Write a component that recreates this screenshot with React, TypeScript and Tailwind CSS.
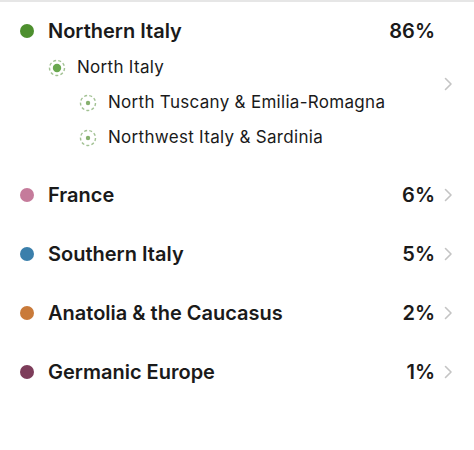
import React from 'react';

type Sub = { name: string; level: number; big?: boolean };

const rows = [
  { name: 'France', pct: '6%', color: 'bg-[#c57b9b]' },
  { name: 'Southern Italy', pct: '5%', color: 'bg-[#3b7fab]' },
  { name: 'Anatolia & the Caucasus', pct: '2%', color: 'bg-[#c97a3a]' },
  { name: 'Germanic Europe', pct: '1%', color: 'bg-[#7d3d5a]' },
];

const subs: Sub[] = [
  { name: 'North Italy', level: 0, big: true },
  { name: 'North Tuscany & Emilia-Romagna', level: 1 },
  { name: 'Northwest Italy & Sardinia', level: 1 },
];

function Chevron() {
  return (
    <svg width="9" height="14" viewBox="0 0 9 14" fill="none" className="ml-[9px]">
      <path d="M1.5 1.5 L7 7 L1.5 12.5" stroke="#c4c4c4" strokeWidth="1.6" strokeLinecap="round" strokeLinejoin="round" />
    </svg>
  );
}

function RingDot({ big }: { big?: boolean }) {
  return (
    <svg width="18" height="18" viewBox="0 0 18 18">
      <circle cx="9" cy="9" r="7.5" fill="none" stroke="#a3c294" strokeWidth="1.4" strokeDasharray="3 2.2" />
      <circle cx="9" cy="9" r={big ? 4.2 : 2.2} fill={big ? '#6aa84f' : '#86b06e'} />
    </svg>
  );
}

export default function App() {
  return (
    <div className="w-[474px] h-[450px] bg-white text-[#1a1a1a] font-['Inter','Liberation_Sans',sans-serif]">
      <div className="h-[2px] bg-[#e6e6e6]" />

      {/* Northern Italy group */}
      <div className="flex pt-[10px] pb-[10px]">
        <div className="flex-1 flex flex-col">
          <div className="h-[38px] flex items-center pl-[20px]">
            <span className="w-[14px] h-[14px] rounded-full bg-[#4d8f2e]" />
            <span className="ml-[14px] flex-1 text-[20px] font-semibold">Northern Italy</span>
            <span className="text-[20px] font-semibold">86%</span>
          </div>
          {subs.map(s => (
            <div
              key={s.name}
              className={`h-[35px] flex items-center ${s.level === 0 ? 'pl-[48px]' : 'pl-[79px]'}`}
            >
              <RingDot big={s.big} />
              <span className="ml-[11px] text-[17px] tracking-[0.3px]">{s.name}</span>
            </div>
          ))}
        </div>
        <div className="w-[39px] flex items-center">
          <Chevron />
        </div>
      </div>

      {rows.map(r => (
        <div key={r.name} className="h-[59px] flex items-center pl-[20px]">
          <span className={`w-[14px] h-[14px] rounded-full ${r.color}`} />
          <span className="ml-[14px] flex-1 text-[20px] font-semibold">{r.name}</span>
          <span className="text-[20px] font-semibold">{r.pct}</span>
          <div className="w-[39px] flex items-center">
            <Chevron />
          </div>
        </div>
      ))}
    </div>
  );
}
